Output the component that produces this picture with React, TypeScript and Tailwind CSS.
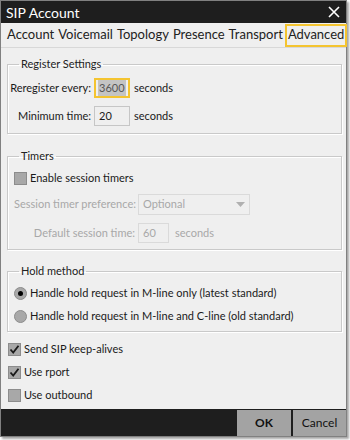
import React from 'react';

const font = { fontFamily: 'Lato, "Open Sans", sans-serif' };

function Check({ checked }: { checked?: boolean }) {
  return (
    <span className="w-[13px] h-[13px] bg-[#a8a8a8] border border-[#8c8c8c] flex items-center justify-center shrink-0">
      {checked && (
        <svg width="11" height="11" viewBox="0 0 11 11">
          <path d="M1.5 5.5 L4.2 8.5 L9.5 1.8" fill="none" stroke="#1a1a1a" strokeWidth="1.8" />
        </svg>
      )}
    </span>
  );
}

function Radio({ checked }: { checked?: boolean }) {
  return (
    <span className="w-[13px] h-[13px] rounded-full bg-[#a8a8a8] border border-[#8c8c8c] flex items-center justify-center shrink-0">
      {checked && <span className="w-[5px] h-[5px] rounded-full bg-black" />}
    </span>
  );
}

function Group({ title, children, className }: { title: string; children: React.ReactNode; className?: string }) {
  return (
    <fieldset className={'border border-[#c9c9c9] shadow-[inset_1px_1px_0_#fff,1px_1px_0_#fff] px-[6px] ' + (className ?? '')}>
      <legend className="ml-[5px] px-[2px] text-[#222] leading-[14px]">{title}</legend>
      {children}
    </fieldset>
  );
}

export default function App() {
  const tabs = ['Account', 'Voicemail', 'Topology', 'Presence', 'Transport'];
  return (
    <div className="w-[350px] h-[440px] bg-white text-[11px] text-[#1a1a1a] whitespace-nowrap" style={font}>
      <div className="w-[347px] h-[437px] border border-[#808080] bg-[#efefef] flex flex-col shadow-[2px_2px_2px_rgba(0,0,0,0.35)]">
        <div className="h-[22px] bg-[#1e1e1e] flex items-center justify-between pl-[5px] pr-[6px] text-white text-[14px]">
          <span>SIP Account</span>
          <svg width="12" height="12" viewBox="0 0 12 12">
            <path d="M1 1 L11 11 M11 1 L1 11" stroke="#fff" strokeWidth="1.6" />
          </svg>
        </div>
        <div className="h-[25px] flex items-center gap-[4px] pl-[6px] text-[13px] text-[#222] border-b border-[#d8d8d8]">
          {tabs.map((t) => (
            <span key={t}>{t}</span>
          ))}
          <span className="shrink-0 border-2 border-[#f4c430] px-[1px] h-[23px] flex items-center ml-[-2px]">Advanced</span>
        </div>
        <div className="flex-1 pl-[6px] pr-[4px] pt-[9px] flex flex-col">
          <Group title="Register Settings" className="h-[77px]">
            <div className="flex items-center h-[20px] mt-[7px] ml-[-4px]">
              <span className="w-[84px] text-right pr-[3px]">Reregister every:</span>
              <span className="w-[36px] h-[20px] border-2 border-[#f4c430] flex items-center px-[2px]">
                <span className="bg-[#c4c4c4] text-[#555] px-[1px]">3600</span>
              </span>
              <span className="ml-[4px]">seconds</span>
            </div>
            <div className="flex items-center h-[20px] mt-[8px] ml-[-4px]">
              <span className="w-[84px] text-right pr-[3px]">Minimum time:</span>
              <span className="w-[36px] h-[20px] border border-[#c6c6c6] flex items-center px-[4px]">20</span>
              <span className="ml-[4px]">seconds</span>
            </div>
          </Group>
          <Group title="Timers" className="h-[101px] mt-[15px]">
            <div className="flex items-center gap-[3px] mt-[7px] h-[16px]">
              <Check />
              <span>Enable session timers</span>
            </div>
            <div className="flex items-center mt-[8px] h-[21px] text-[#a8a8a8]">
              <span className="w-[124px] text-right pr-[3px]">Session timer preference:</span>
              <span className="w-[112px] h-[21px] border border-[#dadada] flex items-center justify-between px-[4px]">
                <span>Optional</span>
                <svg width="9" height="5" viewBox="0 0 9 5">
                  <path d="M0 0 L9 0 L4.5 5 Z" fill="#b0b0b0" />
                </svg>
              </span>
            </div>
            <div className="flex items-center mt-[8px] h-[20px] text-[#a8a8a8]">
              <span className="w-[124px] text-right pr-[3px]">Default session time:</span>
              <span className="w-[31px] h-[20px] border border-[#dadada] flex items-center px-[4px]">60</span>
              <span className="ml-[6px]">seconds</span>
            </div>
          </Group>
          <Group title="Hold method" className="h-[68px] mt-[14px]">
            <div className="flex items-center gap-[3px] mt-[7px] h-[16px]">
              <Radio checked />
              <span>Handle hold request in M-line only (latest standard)</span>
            </div>
            <div className="flex items-center gap-[3px] mt-[7px] h-[16px]">
              <Radio />
              <span>Handle hold request in M-line and C-line (old standard)</span>
            </div>
          </Group>
          <div className="flex flex-col gap-[7px] mt-[9px] pl-[1px]">
            <div className="flex items-center gap-[3px] h-[16px]">
              <Check checked />
              <span>Send SIP keep-alives</span>
            </div>
            <div className="flex items-center gap-[3px] h-[16px]">
              <Check checked />
              <span>Use rport</span>
            </div>
            <div className="flex items-center gap-[3px] h-[16px]">
              <Check />
              <span>Use outbound</span>
            </div>
          </div>
        </div>
        <div className="h-[27px] bg-[#1e1e1e] flex justify-end items-stretch gap-[2px] pt-[1px]">
          <button className="w-[54px] bg-[#a3a3a3] font-bold text-[12px] text-[#111]">OK</button>
          <button className="w-[53px] bg-[#a3a3a3] text-[12px] text-[#111]">Cancel</button>
        </div>
      </div>
    </div>
  );
}
